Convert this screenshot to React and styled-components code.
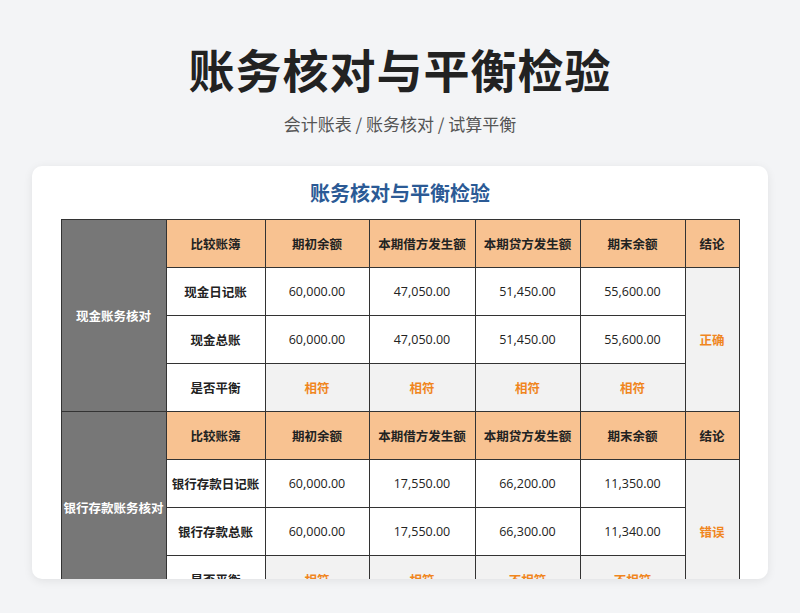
import React from "react";
import styled, { createGlobalStyle } from "styled-components";

const G = createGlobalStyle`
  html,body{margin:0;padding:0;background:#f3f4f6;font-family:"Noto Sans CJK SC","Noto Sans",sans-serif;}
`;
const Page = styled.div`
  width:800px;height:613px;overflow:hidden;display:flex;flex-direction:column;align-items:center;
`;
const Title = styled.h1`
  margin:38px 0 0;font-size:46px;line-height:60px;font-weight:700;color:#222;letter-spacing:1px;
`;
const Sub = styled.div`
  margin-top:14px;font-size:17px;line-height:24px;color:#555;
`;
const Card = styled.div`
  margin-top:30px;width:736px;height:413px;background:#fff;border-radius:10px;
  box-shadow:0 2px 10px rgba(0,0,0,0.08);overflow:hidden;display:flex;flex-direction:column;align-items:center;
`;
const CardTitle = styled.div`
  font-size:20px;font-weight:700;color:#2b5a95;line-height:24px;margin:15px 0 14px;
`;
const Table = styled.table`
  border-collapse:collapse;table-layout:fixed;width:678px;
  td{border:1px solid #333;text-align:center;height:47px;padding:0;font-size:12.5px;color:#222;}
`;
const Col = styled.col`width:${p=>p.$w}px;`;
const Group = styled.td`
  background:#777 !important;color:#fff !important;font-weight:700;border:1px solid #333;
`;
const H = styled.td`
  background:#f8c291;font-weight:700;
`;
const Name = styled.td`font-weight:700;`;
const Num = styled.td`font-family:"Open Sans","Noto Sans CJK SC",sans-serif;`;
const Gray = styled.td`
  background:#f2f2f2;color:#f0861e !important;font-weight:700;
`;

const widths=[105,99,104,106,105,105,54];
const heads = ["比较账簿","期初余额","本期借方发生额","本期贷方发生额","期末余额","结论"];
const sections = [
  { g:"现金账务核对", rows:[["现金日记账","60,000.00","47,050.00","51,450.00","55,600.00"],["现金总账","60,000.00","47,050.00","51,450.00","55,600.00"]], bal:["相符","相符","相符","相符"], c:"正确" },
  { g:"银行存款账务核对", rows:[["银行存款日记账","60,000.00","17,550.00","66,200.00","11,350.00"],["银行存款总账","60,000.00","17,550.00","66,300.00","11,340.00"]], bal:["相符","相符","不相符","不相符"], c:"错误" },
];

export default function App(){
  return (<>
    <G/>
    <Page>
      <Title>账务核对与平衡检验</Title>
      <Sub>会计账表 / 账务核对 / 试算平衡</Sub>
      <Card>
        <CardTitle>账务核对与平衡检验</CardTitle>
        <Table>
          <colgroup>{widths.map((w,i)=><Col key={i} $w={w}/>)}</colgroup>
          <tbody>
            {sections.map(s=>(
              <React.Fragment key={s.g}>
                <tr><Group rowSpan={4}>{s.g}</Group>{heads.map(h=><H key={h}>{h}</H>)}</tr>
                {s.rows.map((r,i)=>(
                  <tr key={i}><Name>{r[0]}</Name>{r.slice(1).map((v,j)=><Num key={j}>{v}</Num>)}
                  {i===0 && <Gray rowSpan={3}>{s.c}</Gray>}</tr>
                ))}
                <tr><Name>是否平衡</Name>{s.bal.map((b,j)=><Gray key={j}>{b}</Gray>)}</tr>
              </React.Fragment>
            ))}
          </tbody>
        </Table>
      </Card>
    </Page>
  </>);
}
